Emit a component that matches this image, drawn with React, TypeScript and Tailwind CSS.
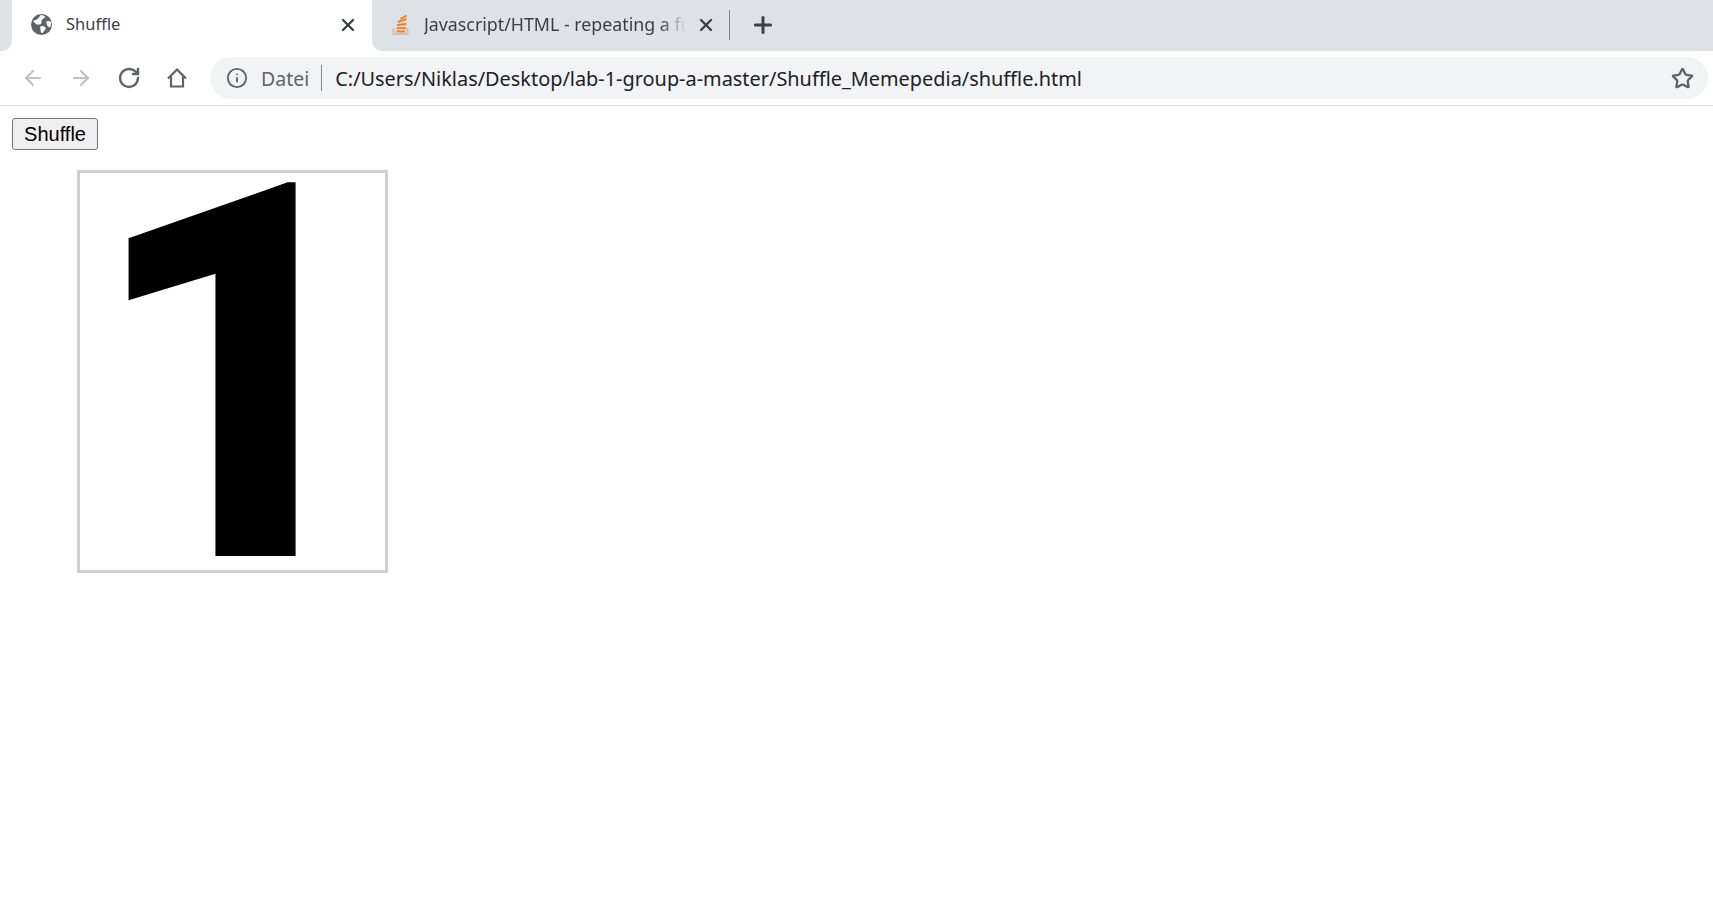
import React from 'react';
import { ArrowLeft, ArrowRight, RotateCw, Info, Star, X, Plus } from 'lucide-react';

const GlobeIcon = () => (
  <svg width="21" height="21" viewBox="0 0 22 22" className="flex-shrink-0">
    <circle cx="11" cy="11" r="11" fill="#5f6368" />
    <path d="M2 7c3 0 6-2 8-6 2 0 4 1 5 2-1 2-4 2-4 5s-2 3-4 3-3-2-5-4zM10 13c2-1 4 0 5 1s0 3-3 6c-1 0-2-1-2-3s-1-3 0-4zM16 8c1-1 3-1 5 0 0 2 0 4-1 6-2 0-4-3-4-6z" fill="#ffffff" />
  </svg>
);

const StackIcon = () => (
  <svg width="20" height="22" viewBox="0 0 20 22" className="flex-shrink-0">
    <path d="M1.5 14v6h14v-6" fill="none" stroke="#c4c4c4" strokeWidth="2" />
    <g stroke="#f48024" strokeWidth="2">
      <path d="M4.5 17.5h8.5" />
      <path d="M4.5 14.2h9.5" />
      <path d="M5 11l9.5-1" />
      <path d="M6 8l8.5-3" />
      <path d="M8.5 5.2l6-3.7" />
    </g>
  </svg>
);

const HomeIcon = () => (
  <svg width="24" height="24" viewBox="0 0 24 24" fill="none" stroke="#5f6368" strokeWidth="2.2" className="flex-shrink-0">
    <path d="M3 12.5L12 3.5l9 9M6 10.5V20.5h12V10.5" />
  </svg>
);

export default function App() {
  return (
    <div className="min-h-[902px] bg-white font-['Noto_Sans',sans-serif]">
      {/* tab strip */}
      <div className="flex h-[51px]">
        <div className="w-3 rounded-br-[10px] bg-[#dee1e6]" />
        <div className="flex w-[360px] items-center rounded-t-[10px] bg-white pb-[2px] pl-[19px] pr-[14px]">
          <GlobeIcon />
          <span className="ml-[14px] flex-1 text-[16.5px] text-[#3c4043]">Shuffle</span>
          <X size={20} strokeWidth={2.8} className="text-[#3c4043]" />
        </div>
        <div className="flex flex-1 items-center rounded-bl-[10px] bg-[#dee1e6] pb-[2px] pl-[20px]">
          <StackIcon />
          <span className="ml-[12px] w-[262px] flex-shrink-0 overflow-hidden whitespace-nowrap text-[17.8px] text-[#3c4043] [mask-image:linear-gradient(to_right,black_90%,transparent)]">
            Javascript/HTML - repeating a function
          </span>
          <X size={20} strokeWidth={2.8} className="ml-[10px] flex-shrink-0 text-[#3c4043]" />
          <div className="ml-[13px] h-[30px] w-px bg-[#80868b]" />
          <Plus size={26} strokeWidth={2.8} className="ml-[20px] text-[#3c4043]" />
        </div>
      </div>

      {/* toolbar */}
      <div className="flex h-[55px] items-center border-b border-[#dadce0] bg-white">
        <div className="ml-[21px] flex items-center gap-[24px]">
          <ArrowLeft size={24} strokeWidth={2.2} className="text-[#bdc1c6]" />
          <ArrowRight size={24} strokeWidth={2.2} className="text-[#bdc1c6]" />
          <RotateCw size={24} strokeWidth={2.4} className="text-[#5f6368]" />
          <HomeIcon />
        </div>
        <div className="ml-[21px] mr-[5px] flex h-[42px] flex-1 items-center rounded-full bg-[#f1f3f4] pl-[16px] pr-[14px]">
          <Info size={22} strokeWidth={2} className="text-[#5f6368]" />
          <span className="ml-[13px] pt-[1px] text-[19.5px] text-[#5f6368]">Datei</span>
          <div className="ml-[12px] h-[26px] w-px bg-[#80868b]" />
          <span className="ml-[13px] flex-1 pt-[1px] text-[19.9px] text-[#202124]">
            C:/Users/Niklas/Desktop/lab-1-group-a-master/Shuffle_Memepedia/shuffle.html
          </span>
          <Star size={23} strokeWidth={2.4} className="text-[#5f6368]" />
        </div>
      </div>

      {/* page */}
      <div className="pl-3 pt-[12px]">
        <button className="block h-[32px] w-[86px] rounded-[3px] border border-[#767676] bg-[#efefef] text-[20px] text-black font-['Liberation_Sans',sans-serif]">
          Shuffle
        </button>
        <div className="ml-[65px] mt-[20px] flex h-[403px] w-[311px] items-center justify-center overflow-hidden border-[3px] border-[#cfcfcf] bg-white pl-[9px] pt-[9px]">
          <span className="text-[525px] leading-none font-extrabold text-black font-['Roboto',sans-serif]">1</span>
        </div>
      </div>
    </div>
  );
}
